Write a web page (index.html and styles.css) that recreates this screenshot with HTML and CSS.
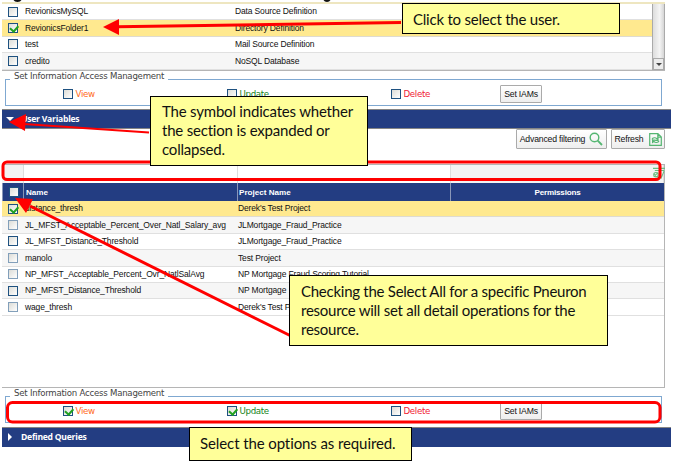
FILE: index.html
```html
<!DOCTYPE html>
<html lang="en">
<head>
<meta charset="utf-8">
<title>Information Access Management</title>
<link rel="stylesheet" href="styles.css">
</head>
<body>
<main class="page">
  <section class="sources">
    <div class="rows">
      <div class="row"><span class="cell-check"><i class="box"></i></span><span class="src-name">RevionicsMySQL</span><span>Data Source Definition</span></div>
      <div class="row selected"><span class="cell-check"><i class="box checked"></i></span><span class="src-name">RevionicsFolder1</span><span>Directory Definition</span></div>
      <div class="row"><span class="cell-check"><i class="box"></i></span><span class="src-name">test</span><span>Mail Source Definition</span></div>
      <div class="row alt"><span class="cell-check"><i class="box"></i></span><span class="src-name">credito</span><span>NoSQL Database</span></div>
    </div>
    <div class="scrollbar"><div class="scroll-btn"></div></div>
  </section>

  <section class="iam">
    <div class="iam-box">
      <span class="legend">Set Information Access Management</span>
      <div class="option"><i class="box"></i><span class="view">View</span></div>
      <div class="option"><i class="box"></i><span class="update">Update</span></div>
      <div class="option last"><i class="box"></i><span class="delete">Delete</span></div>
      <button class="btn set">Set IAMs</button>
    </div>
  </section>

  <header class="bar"><i class="tri down"></i><span>User Variables</span></header>

  <div class="toolbar">
    <button class="btn adv"><span>Advanced filtering</span>
      <svg width="14" height="14" viewBox="0 0 14 14" fill="none" stroke="#55b672" stroke-width="1.4"><circle cx="5.5" cy="5.5" r="4.3"/><path d="M8.7 8.7 13 13" stroke-width="1.8"/></svg>
    </button>
    <button class="btn refresh"><span>Refresh</span>
      <svg width="13" height="13" viewBox="0 0 13 13" fill="none" stroke="#55b672" stroke-width="1.2"><path d="M.7.7h8.2l3.4 3.2v8.4H.7zM8.8.8v3.4h3.4M3 6.4c.7-2 3.5-2.2 5-.6l1-1v2.5H6.3M10 7.8c-.8 2-3.700 2.300-5.100.6l-1.300 1V7.200h2.800"/></svg>
    </button>
  </div>

  <section class="grid">
    <div class="filters"><span class="shade"></span><span></span><span></span><span class="shade filter-last">
      <svg width="12" height="12" viewBox="0 0 13 12" fill="none" stroke="#6abd80" stroke-width="1.2"><path d="M0 1h13M2 3.300h10M7 5l2 6 3-7M1 7l5 4M5.500 5.600 1 10"/><circle cx="3.200" cy="7.800" r="2.400"/></svg></span></div>
    <div class="head"><span class="head-check"><i class="box"></i></span><span class="h-name">Name</span><span class="h-project">Project Name</span><span class="h-perm">Permissions</span></div>
    <div class="row selected"><span class="cell-check"><i class="box checked"></i></span><span class="v-name">distance_thresh</span><span>Derek's Test Project</span></div>
    <div class="row alt"><span class="cell-check"><i class="box pale"></i></span><span class="v-name">JL_MFST_Acceptable_Percent_Over_Natl_Salary_avg</span><span>JLMortgage_Fraud_Practice</span></div>
    <div class="row"><span class="cell-check"><i class="box"></i></span><span class="v-name">JL_MFST_Distance_Threshold</span><span>JLMortgage_Fraud_Practice</span></div>
    <div class="row alt"><span class="cell-check"><i class="box pale"></i></span><span class="v-name">manolo</span><span>Test Project</span></div>
    <div class="row"><span class="cell-check"><i class="box pale"></i></span><span class="v-name">NP_MFST_Acceptable_Percent_Ovr_NatlSalAvg</span><span>NP Mortgage Fraud Scoring Tutorial</span></div>
    <div class="row alt"><span class="cell-check"><i class="box"></i></span><span class="v-name">NP_MFST_Distance_Threshold</span><span>NP Mortgage</span></div>
    <div class="row"><span class="cell-check"><i class="box pale"></i></span><span class="v-name">wage_thresh</span><span>Derek's Test P</span></div>
  </section>

  <section class="iam lower">
    <div class="iam-box">
      <span class="legend">Set Information Access Management</span>
      <div class="option"><i class="box checked"></i><span class="view">View</span></div>
      <div class="option"><i class="box checked"></i><span class="update">Update</span></div>
      <div class="option last"><i class="box"></i><span class="delete">Delete</span></div>
      <button class="btn set">Set IAMs</button>
    </div>
  </section>

  <header class="bar second"><i class="tri right"></i><span>Defined Queries</span></header>

  <svg class="marks" width="675" height="461" viewBox="0 0 675 461">
    <path d="M13.500 0h8q-1 2-4 2t-4-2zM323.500 0h7q-1 2-3.500 2t-3.500-2z" fill="#111"/>
    <g fill="none" stroke="red" stroke-width="3">
      <rect x="3" y="162" width="657" height="17.500" rx="4"/>
      <rect x="7.500" y="402.500" width="652.500" height="19.500" rx="5"/>
      <path d="M401 22.500 117 26.800"/>
      <path d="M149 132.500 24 124" stroke-width="2"/>
      <path d="M290 335.500 30 206"/>
    </g>
    <path d="M103 27l16-8v16zM9 122l17-8-1 17zM15 198l18 1-7 14z" fill="red"/>
  </svg>
  <aside class="note note-user"><p>Click to select the user.</p></aside>
  <aside class="note note-symbol"><p>The symbol indicates whether</p><p>the section is expanded or</p><p>collapsed.</p></aside>
  <aside class="note note-all"><p>Checking the Select All for a specific Pneuron</p><p>resource will set all detail operations for the</p><p>resource.</p></aside>
  <aside class="note note-options"><p>Select the options as required.</p></aside>
</main>
</body>
</html>
```
FILE: styles.css
```css
* { box-sizing: border-box; }
body { margin: 0; background: #fff; }
p { margin: 0; }
.page {
  position: relative;
  width: 675px;
  height: 461px;
  overflow: hidden;
  padding-top: 2px;
  font: 8.5px/1 "Liberation Sans", sans-serif;
  color: #111;
  white-space: nowrap;
}
.sources {
  display: flex;
  width: 663px;
  height: 69px;
  margin-left: 2px;
  border-top: 2px solid #eee6c0;
  border-bottom: 1px solid #b5b5b5;
}
.rows { width: 650px; }
.row {
  display: flex;
  align-items: center;
  height: 16.4px;
  border-bottom: 1px solid #e0e0e0;
  letter-spacing: -.15px;
}
.row.alt { background: #f6f6f6; }
.row.selected { background: #ffe98f; border-color: #dedbd0; }
.cell-check { width: 23px; padding-left: 6px; display: flex; }
.box {
  display: block;
  flex: none;
  position: relative;
  width: 10px;
  height: 10px;
  border: 1px solid #1e5180;
  background: linear-gradient(135deg, #dcdcd7, #fff);
}
.box.pale { border-color: #829fba; }
.box.checked::after {
  content: "";
  position: absolute;
  left: 1px;
  top: 1px;
  width: 6px;
  height: 3.500px;
  border: solid #21a121;
  border-width: 0 0 2px 2px;
  transform: rotate(-48deg);
}
.src-name { width: 210px; }
.scrollbar {
  width: 13px;
  display: flex;
  align-items: flex-end;
  border: solid #aaa;
  border-width: 0 1px;
  background: linear-gradient(90deg, #ddd, #f4f4f4 60%, #d5d5d5);
}
.scroll-btn {
  width: 11px;
  height: 12px;
  border: 1px solid #aaa;
  background: #ececec;
  display: grid;
  place-items: center;
}
.scroll-btn::after { content: ""; border: 3px solid transparent; border-top-color: #444; border-bottom: 0; }

.iam { height: 38px; padding: 8px 0 0 5px; }
.iam-box {
  position: relative;
  display: flex;
  align-items: center;
  width: 657px;
  height: 27px;
  border: 1px solid #7fa8d1;
  padding: 3px 0 0 57px;
}
.legend {
  position: absolute;
  left: 4px;
  top: -9px;
  padding: 0 4px;
  background: #fff;
  color: #444;
  font: 8.6px/11px "DejaVu Sans", sans-serif;
  letter-spacing: -.24px;
}
.option { display: flex; align-items: center; gap: 2.500px; width: 164px; font: 8.7px/10px "DejaVu Sans", sans-serif; letter-spacing: -.35px; }
.option.last { width: 108px; }
.view { color: #ff6b22; }
.update { color: #15851a; }
.delete { color: #f02035; }
.btn {
  display: flex;
  align-items: center;
  justify-content: center;
  height: 20px;
  padding: 0;
  border: 1px solid #aaa;
  border-radius: 1px;
  background: linear-gradient(#fff, #eee);
  color: #111;
  font: 8.700px/1 "Liberation Sans", sans-serif;
  letter-spacing: -.2px;
}
.btn.set { width: 42px; height: 18px; margin-left: 1px; }
.bar {
  display: flex;
  align-items: center;
  width: 669px;
  height: 20px;
  margin-left: 2px;
  border: solid #858585;
  border-width: 1px 0;
  background: #233d82;
  color: #fff;
  font: bold 8.600px/1 "Open Sans", sans-serif;
  letter-spacing: -.25px;
}
.tri { width: 19px; padding-left: 4px; }
.tri::after { content: ""; display: block; width: 0; border: 4px solid transparent; }
.tri.down::after { border-top-color: #fff; border-bottom: 0; }
.tri.right::after { border-left-color: #fff; border-right: 0; margin-left: 2px; }

.toolbar { display: flex; justify-content: flex-end; gap: 4px; height: 35px; padding: 0 10px 0 0; }
.adv { width: 91px; gap: 4px; }
.refresh { width: 54px; gap: 5px; }

.grid {
  width: 663px;
  height: 224px;
  margin-left: 2px;
  border: solid #b5b5b5;
  border-width: 1px 1px 1px 0;
}
.filters, .head { display: grid; grid-template-columns: 22px 214px 213px 1fr; height: 18px; }
.filters span { border-right: 1px solid #ddd; }
.filters .shade { background: #f3f3f3; }
.filter-last { position: relative; }
.filter-last svg { position: absolute; right: -2px; top: 2px; }
.head { background: #233d82; color: #fff; font: bold 8.100px/1 "Liberation Sans", sans-serif; }
.head > span { display: flex; align-items: center; border-right: 1px solid #8997b8; padding-top: 2px; }
.head .head-check { padding: 0 0 0 6px; border-left: 1px solid #8997b8; }
.h-name { padding-left: 2px; }
.h-project { padding-left: 1px; }
.head .h-perm { justify-content: center; letter-spacing: -.2px; border-right: 0; }
.v-name { width: 213px; }
.lower { height: 39px; }
.second { border-bottom-color: #233d82; }

.marks { position: absolute; left: 0; top: 0; }
.note {
  position: absolute;
  border: 1px solid #000;
  background: #ff9;
  color: #111;
  font: 15px/19px Lato, sans-serif;
}
.note-user { left: 402px; top: 3px; width: 218px; height: 31px; padding: 6px 10px; letter-spacing: -.22px; }
.note-symbol { left: 150px; top: 96px; width: 218px; height: 70px; padding: 5px 11px; letter-spacing: -.2px; }
.note-all { left: 289px; top: 275px; width: 319px; height: 71px; padding: 6px 11px; letter-spacing: -.26px; }
.note-options { left: 189px; top: 427px; width: 223px; height: 34px; padding: 6px 10px; letter-spacing: -.1px; }
```
